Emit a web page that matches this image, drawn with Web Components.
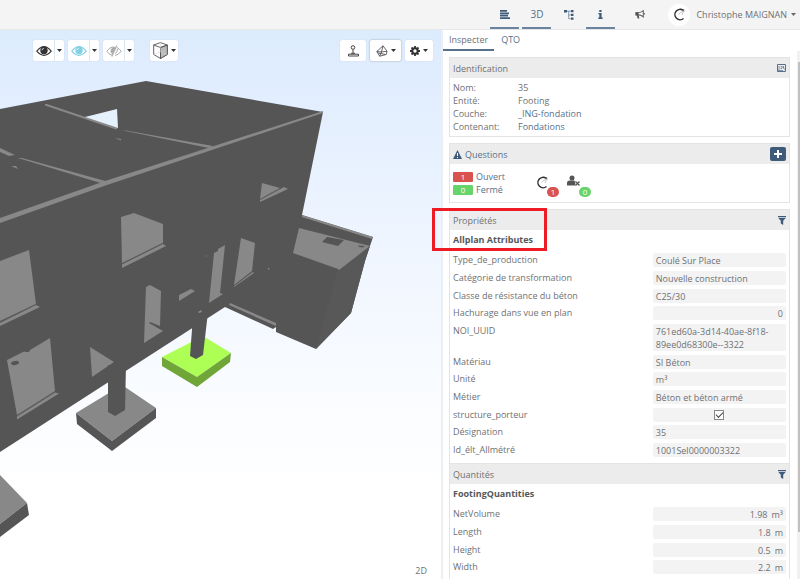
<!DOCTYPE html>
<html lang="fr">
<head>
<meta charset="utf-8">
<title>Maquette 3D</title>
<style>
html, body { margin: 0; height: 100%; }
body {
  --ink: #6f7173; --link: #56718c; --navy: #3f5b7a; --line: #e4e4e4; --head: #ececec; --field: #f3f3f3;
  --red: #d9534f; --green: #67d36b;
  font-family: "Open Sans", "Noto Sans", sans-serif; font-size: 9px; line-height: 13px; color: var(--ink);
  background: #fff;
}
</style>
</head>
<body>
<app-shell>
  <app-header slot="header"></app-header>
  <model-viewer slot="viewer"></model-viewer>
  <inspector-panel slot="panel"></inspector-panel>
</app-shell>

<script>
const define = (name, html, setup) => customElements.define(name, class extends HTMLElement {
  connectedCallback() {
    if (this.shadowRoot) return;
    this.attachShadow({ mode: 'open' }).innerHTML = html;
    if (setup) setup(this, this.shadowRoot);
  }
});

const reset = `*{box-sizing:border-box} button{font:inherit;color:inherit;background:none;border:0;padding:0;margin:0;cursor:pointer;display:flex;align-items:center;justify-content:center}
a{color:var(--link);text-decoration:none} svg{display:block} h2,h3,p,dl,dd,ul{margin:0;padding:0}`;
const swirl = `<path d="M11 3.200A5.200 5.200 0 1 0 11.500 11.500" fill="none" stroke="#333" stroke-width="1.500"/><path d="M12.500 4Q8.500 4.500 6.500 7.500M12.500 4Q10.500 5.500 10 8" fill="none" stroke="#aaa" stroke-width=".7"/><path d="M8.500 1.800l4 1-1 1.200z" fill="#333"/>`;

define('app-shell', `<style>${reset}
:host{display:grid;height:100vh;min-height:400px;grid-template-rows:30px minmax(0,1fr);grid-template-columns:minmax(0,441fr) minmax(300px,359fr);overflow:hidden}
slot[name=header]::slotted(*){grid-column:1/-1}
</style><slot name="header"></slot><slot name="viewer"></slot><slot name="panel"></slot>`);

define('app-header', `<style>${reset}
:host{display:flex;justify-content:flex-end;align-items:stretch;background:#f4f4f4;border-bottom:1px solid #e7e7e7;padding-right:4px}
nav{display:flex;gap:3px;color:var(--navy)}
nav button{width:29px;border-bottom:2px solid transparent;border-top:2px solid transparent;font-size:10px;color:var(--link)}
nav button.on{border-bottom-color:#6a84a0}
.news{width:29px;margin-left:10px}
.user{margin-left:14px;gap:6px}
.avatar{width:22px;height:22px;border-radius:50%;background:#fff;display:flex;align-items:center;justify-content:center}
.name{display:flex;align-items:center;gap:4px}
</style>
<nav aria-label="Panneaux">
<button class="on" aria-label="Liste"><svg width="10" height="9" viewBox="0 0 10 9" fill="#3f5b7a"><path d="M0 0h7v1.800H0zM0 2.400h9v1.800H0zM0 4.800h8v1.800H0zM0 7.200h10V9H0z"/></svg></button>
<button class="on">3D</button>
<button aria-label="Arborescence"><svg width="10" height="10" viewBox="0 0 10 10" fill="#3f5b7a"><path d="M0 0h3v2.500H0zM7 0h2.500v2.200H7zM7 3.800h2.500V6H7zM7 7.500h2.500v2.300H7z"/><path d="M3 1.200h4M4.700 1.200v7.500H7M4.700 4.900H7" fill="none" stroke="#6a84a0" stroke-width=".8"/></svg></button>
<button class="on" aria-label="Informations"><svg width="5" height="9" viewBox="0 0 5 9" fill="#3f5b7a"><path d="M1.300 0h2.200v2H1.300zM.4 3h3.200v4.600h1V9H.3V7.600h1V4.300H.4z"/></svg></button>
</nav>
<button class="news" aria-label="Annonces"><svg width="10" height="9" viewBox="0 0 10 9"><path d="M8.300.7v6.200Q6 4.800 3.500 4.900H1V2.700h2.500Q6 2.800 8.300.7z" fill="#fff" stroke="#666" stroke-width="1.100"/><path d="M.6 2.300h3v3h-3zM1.800 5.200h1.800l.8 3.300H2.600zM8.800 3h1v1.600h-1z" fill="#555"/></svg></button>
<button class="user"><span class="avatar"><svg width="15" height="15" viewBox="0 0 15 15">${swirl}</svg></span><span class="name">Christophe MAIGNAN <svg width="5" height="3" viewBox="0 0 5 3"><path d="M0 0h5L2.500 3z" fill="#666"/></svg></span></button>`);

const caret = `<svg width="5" height="3" viewBox="0 0 5 3"><path d="M0 0h5L2.500 3z" fill="#333"/></svg>`;
const eye = c => `<svg width="16" height="12" viewBox="0 0 16 12"><path d="M.8 6.200Q8-3 15.200 6.200Q8 14.600.8 6.200z" fill="#fff" stroke="${c}" stroke-width="1.100"/><circle cx="8" cy="5.500" r="3.700" fill="${c}"/><path d="M6 5.200Q6.200 3.500 7.800 3.300" fill="none" stroke="#fff" stroke-width=".8"/></svg>`;

define('split-button', `<style>${reset}
:host{display:flex;height:21px;background:#fff;border-radius:2px;box-shadow:0 0 1px #b9c4d2}
button{width:21px}
button + button{width:10px;border-left:1px solid #e0e6ee}
</style><button aria-label="Action"><slot></slot></button><button aria-label="Options">${caret}</button>`);

define('tool-button', `<style>${reset}
:host{display:flex;height:21px;background:#fff;border-radius:2px;box-shadow:0 0 1px #b9c4d2}
:host([active]){box-shadow:0 0 2px #8d97a4}
button{gap:3px;flex:1;padding:0 3px}
.c{display:none} :host([menu]) .c{display:block}
</style><button aria-label="Outil"><slot></slot><span class="c">${caret}</span></button>`);

define('model-viewer', `<style>${reset}
:host{display:grid;min-width:0;min-height:0;background:linear-gradient(#dcebfd 0,#e2eefe 12%,#f0f6ff 42%,#fafcff 68%,#fff 84%);overflow:hidden}
:host > *{grid-area:1/1;min-width:0;min-height:0}
.scene{width:100%;height:100%}
.bar{display:flex;gap:4px;padding:10px 8px 0 33px;align-self:start}
.cube{margin-left:12px;width:28px}.stamp{margin-left:auto;width:26px}.clip{width:31px}.gear{width:28px}
.mode{align-self:end;justify-self:end;padding:0 14px 2px 0}
</style>
<svg class="scene" viewBox="0 30 441 549" preserveAspectRatio="xMinYMin slice" role="img" aria-label="Modèle 3D">
<g fill="#555">
<path d="M0 109L146 81l177 31-21 103 71 22-8 24-14 52-35 36-40-17v-5l-3 2-48-22L0 452z"/>
<path d="M338 269l32-23-5 15-14 52-35 36z" fill="#585858"/>
</g>
<g fill="#888">
<path d="M0 218L105 181l218-70v2L107 185 0 223z"/>
<path d="M45 104l2 0 71 24-2 1.500-6-2-65-22zM123 130.500l3 0 87 15.500-4 2zM0 148l15 7-6 1-9-4zM18 158l4 0 87 24-5 2zM115 138l6 1v1.500zM11 166l5 0 2 3z"/>
<path d="M121 217l13-4 29 11v19l-41 20zM122 264.500l41-20.500 3 2-44 22z"/>
<path d="M0 261l29-11 7 54-36 17zM0 323l36-18 4 2-40 19z"/>
<path d="M7 360l18-9 5-1 20-12 5 53-38 24zM17 416.500l38-24 4 1-42 26z"/>
<path d="M90 347l24 15-22 15zM146 287l4-2 11 6-1 35-10-4-1 1 14 8-19 12z"/>
<path d="M179 295l12-6 4 2-16 10zM198 312l3-2 1 2-3 1zM206 255l1 1-1 1zM268 268l2 0-2 2z"/>
<path d="M214 253l4-2 0-2 7-4-5 48 3 1-14 9zM241 238l14 5-3 28-18 14zM234 286l19-14 1 1-20 14z"/>
<path d="M262 183l18 5-20 11zM260 200l24-13 4 2-28 13z"/>
<path d="M302 215l71 22-1 2-70-22zM299 228l71 18-31 24-1-1-45-16z"/>
<path d="M230 303l46 20v3l-47-21z"/>
<path d="M122 385l34 23-44 33-36-28zM0 475l27 28-27 21z"/>
</g>
<path d="M85 117l32-8 1 19z" fill="#e6f1fe"/>
<g fill="#555">
<path d="M327 237l17 3-6 6-16-4zM358 245.500l7 .5-2 1.500-4-.5zM24 352l2-2 4 0-1 2z"/><ellipse cx="15" cy="363" rx="4" ry="2" transform="rotate(-12 15 363)"/>
<path d="M76 413l36 28 44-33v10l-44 33-35-27zM27 503l2 12-29 22v-13z"/>
</g>
<path d="M203 336l28 17-34 24-35-20z" fill="#adff55"/>
<path d="M162 357l35 20 34-24-1 9-33 25-35-21z" fill="#70a637"/>
<g fill="#555"><path d="M108 365h18l-1 45-10 6-7-4zM193 316l15-4-5 43-7 4-6-3z"/></g>
<g fill="none" stroke="#666" stroke-width=".6"><path d="M121.500 264l41-21M0 322l36-18M17 416l38-24M234 286l18-14M260 199.500l20-11"/></g>
</svg>
<div class="bar">
<split-button>${eye('#333')}</split-button>
<split-button>${eye('#83cfe5')}</split-button>
<split-button><svg width="16" height="12" viewBox="0 0 16 12" fill="none" stroke="#aaa"><path d="M8 1.800Q3.500 2 .8 6.200Q3.200 9.800 6 10.300M11 2.600Q13.500 3.800 15.200 6.200Q12.500 10 9 10.400"/><path d="M8 2.500Q4.500 3.500 5 6.500Q5.300 8 6.200 8.500L9 2.500z" fill="#aaa"/><path d="M10.800.5L5.800 11.500" stroke-width="1.200"/><path d="M11.300 4Q11.800 6.500 9.500 8.500"/></svg></split-button>
<tool-button class="cube" menu><svg width="15" height="17" viewBox="0 0 15 17" stroke="#555" stroke-width=".9" stroke-linejoin="round"><path d="M7.500.6L14.300 3v9.500l-6.800 4L.7 12.500V3z" fill="#fff"/><path d="M7.500 5.500L14.300 3v9.500l-6.800 4z" fill="#bbb"/><path d="M.7 3l6.800 2.500L14.300 3M7.500 5.500v11" fill="none"/><path d="M7.500.6v9.400L.7 12.500M7.500 10l6.800 2.500" stroke="#ccc" stroke-width=".5" fill="none"/></svg></tool-button>
<tool-button class="stamp"><svg width="11" height="12" viewBox="0 0 11 12" fill="none" stroke="#444"><circle cx="5" cy="2.500" r="1.800"/><path d="M5 4.500v4M3 8.300h4M.5 9.200h10v1.800H.5z"/></svg></tool-button>
<tool-button class="clip" menu active><svg width="12" height="12" viewBox="0 0 12 12" fill="none" stroke="#555" stroke-width=".9" stroke-linejoin="round"><path d="M.8 6.500L7 .8l4 5.400-.8 3.300-6.500 1.700zM7 .8L5.500 7l5.500-.8M.8 6.500l4.700.5-1.800 4.200M2 8l7.500 1.500"/></svg></tool-button>
<tool-button class="gear" menu><svg width="10" height="10" viewBox="0 0 10 10"><circle cx="5" cy="5" r="2.700" fill="none" stroke="#333" stroke-width="2"/><g stroke="#333" stroke-width="1.800"><path d="M5 0v2M5 8v2M0 5h2M8 5h2M1.500 1.500l1.300 1.300M7.200 7.200l1.300 1.300M8.500 1.500L7.200 2.800M2.800 7.200L1.500 8.500"/></g></svg></tool-button>
</div>
<span class="mode">2D</span>`);

define('info-card', `<style>${reset}
:host{display:block;position:relative;border:1px solid var(--line);background:#fff}
header{display:flex;justify-content:space-between;align-items:center;height:20px;padding:0 3px;background:var(--head)}
h2{font:inherit;line-height:13px;display:flex;align-items:center;gap:3px}
</style><header><h2><slot name="title"></slot></h2><slot name="action"></slot></header><slot></slot>`);

define('property-list', `<style>${reset}
:host{display:block;padding:3px 3px 2px}
h3{font-size:9px;line-height:13px;padding:0 0 7px;color:#55585a}
.row{display:grid;grid-template-columns:3fr 2fr;align-items:start;padding-bottom:4px}
.row:nth-child(3n){padding-bottom:3px}
dd{background:var(--field);border-radius:2px;padding:1px 3px 0;min-height:14px;overflow-wrap:anywhere}
dd.num{display:flex;justify-content:flex-end;gap:4px}
dd.check{display:flex;justify-content:center;align-items:center;padding:0}
input{appearance:none;margin:0;width:10px;height:10px;border:1px solid #888;background:#fff;display:grid;place-items:center}
input::before{content:"";width:6px;height:3px;border:solid #444;border-width:0 0 1px 1px;transform:translateY(-1px) rotate(-45deg)}
</style><h3></h3><dl></dl>`, (host, root) => {
  root.querySelector('h3').textContent = host.getAttribute('heading');
  const list = root.querySelector('dl');
  for (const line of host.textContent.trim().split('\n')) {
    const [label, value, kind] = line.trim().split('|');
    const row = document.createElement('div');
    row.className = 'row';
    const dt = document.createElement('dt'), dd = document.createElement('dd');
    if (kind) dd.className = kind;
    if (kind === 'check') {
      const tag = document.createElement('label'), box = document.createElement('input');
      box.type = 'checkbox'; box.checked = true; box.id = 'box';
      tag.htmlFor = 'box'; tag.textContent = label;
      dt.append(tag); dd.append(box);
    } else {
      dt.textContent = label;
      if (kind === 'num') for (const part of value.split(' ')) {
        const span = document.createElement('span');
        span.textContent = part;
        dd.append(span);
      } else dd.textContent = value;
    }
    row.append(dt, dd); list.append(row);
  }
});

const funnel = `<svg width="8" height="9" viewBox="0 0 8 9" fill="#3f5b7a"><path d="M0 0h8v1.200H0zM.3 2h7.400L5.200 4.800V9L2.800 7.500V4.800z"/></svg>`;

define('inspector-panel', `<style>${reset}
:host{display:grid;grid-template-columns:minmax(0,1fr) 3px;grid-template-rows:21px minmax(0,1fr);min-height:0;border-left:2px solid #eceff1;background:#fff;overflow-x:visible;overflow-y:clip}
.tabs{grid-column:1/-1;display:flex}
.tabs button{padding:0 7px;font-size:9px;color:var(--link);border-bottom:2px solid transparent}
.tabs button.on{color:var(--ink);border-bottom-color:#56718c;padding:0 6px}
.body{padding:6px 7px 0 6px;display:flex;flex-direction:column;overflow-x:visible;overflow-y:clip}
.body > *{flex:none}
.gap{margin-bottom:6px}
.bar{background:#f1f1f1;padding:11px 0 0 1px}
.thumb{height:91%;background:#c1c1c1}
.ident{display:grid;grid-template-columns:65px 1fr;padding:3px}
.q{display:flex;align-items:flex-start;padding:6px 3px;height:38px}
.states{display:grid;grid-template-columns:20px auto;column-gap:3px;align-items:center;margin-right:30px}
.n{color:#fff;font-size:8px;line-height:10px;text-align:center;border-radius:1px}
.r{background:var(--red)}.g{background:var(--green)}
.who{position:relative;width:32px;height:26px;padding-top:5px}
.who .n{position:absolute;left:12px;top:17px;min-width:12px;border-radius:5px}
.plus{width:16px;height:14px;background:var(--navy);border-radius:2px}
.mark{position:absolute;left:-18px;top:-2px;width:115px;height:43px;border:3px solid #ed1c24;pointer-events:none}
.low{margin-top:-1px}
</style>
<div class="tabs" role="tablist"><button class="on" role="tab" aria-selected="true">Inspecter</button><button role="tab" aria-selected="false">QTO</button></div>
<div class="body">
<info-card class="gap"><span slot="title">Identification</span>
<button slot="action" aria-label="Détails"><svg width="9" height="8" viewBox="0 0 9 8" fill="none" stroke="#56718c"><path d="M.5.5h8v7h-8z"/><path d="M2 2v4M3.500 2.500h1.500v2H3.500M6 2.500l1.500 3M6.500 2v2M1 6.500h5" stroke-width=".7"/></svg></button>
<dl class="ident"><dt>Nom:</dt><dd>35</dd><dt>Entité:</dt><dd>Footing</dd><dt>Couche:</dt><dd><a href="#couche">_ING-fondation</a></dd><dt>Contenant:</dt><dd><a href="#contenant">Fondations</a></dd></dl>
</info-card>
<info-card class="gap"><svg slot="title" width="9" height="9" viewBox="0 0 9 9"><path d="M4.500 0L9 9H0z" fill="#3f5b7a"/><path d="M4 3h1v3H4zM4 7h1v1H4z" fill="#fff"/></svg><a slot="title" href="#questions">Questions</a>
<button slot="action" class="plus" aria-label="Ajouter"><svg width="8" height="8" viewBox="0 0 8 8" fill="#fff"><path d="M3 0h2v3h3v2H5v3H3V5H0V3h3z"/></svg></button>
<div class="q"><div class="states"><span class="n r">1</span><a href="#ouvert">Ouvert</a><span class="n g">0</span><a href="#ferme">Fermé</a></div>
<div class="who"><svg width="15" height="15" viewBox="0 0 15 15">${swirl}</svg><span class="n r">1</span></div>
<div class="who"><svg width="14" height="12" viewBox="0 0 14 12"><circle cx="5" cy="3" r="2.500" fill="#555"/><path d="M0 10.500V8Q0 5.500 2.500 5.500h4.500Q8.500 5.800 8.300 10.500z" fill="#555"/><path d="M8.500 6.500l4 4M12.500 6.500l-4 4" stroke="#555" stroke-width="1.300"/></svg><span class="n g">0</span></div></div>
</info-card>
<info-card><span slot="title">Propriétés</span><button slot="action" aria-label="Filtrer">${funnel}</button>
<property-list heading="Allplan Attributes">Type_de_production|Coulé Sur Place
Catégorie de transformation|Nouvelle construction
Classe de résistance du béton|C25/30
Hachurage dans vue en plan|0|num
NOI_UUID|761ed60a-3d14-40ae-8f18-89ee0d68300e--3322
Matériau|SI Béton
Unité|m³
Métier|Béton et béton armé
structure_porteur||check
Désignation|35
Id_élt_Allmétré|1001Sel0000003322</property-list>
<div class="mark"></div>
</info-card>
<info-card class="low"><span slot="title">Quantités</span><button slot="action" aria-label="Filtrer">${funnel}</button>
<property-list heading="FootingQuantities">NetVolume|1.98 m³|num
Length|1.8 m|num
Height|0.5 m|num
Width|2.2 m|num</property-list>
</info-card>
</div>
<div class="bar"><div class="thumb"></div></div>`);
</script>
</body>
</html>
